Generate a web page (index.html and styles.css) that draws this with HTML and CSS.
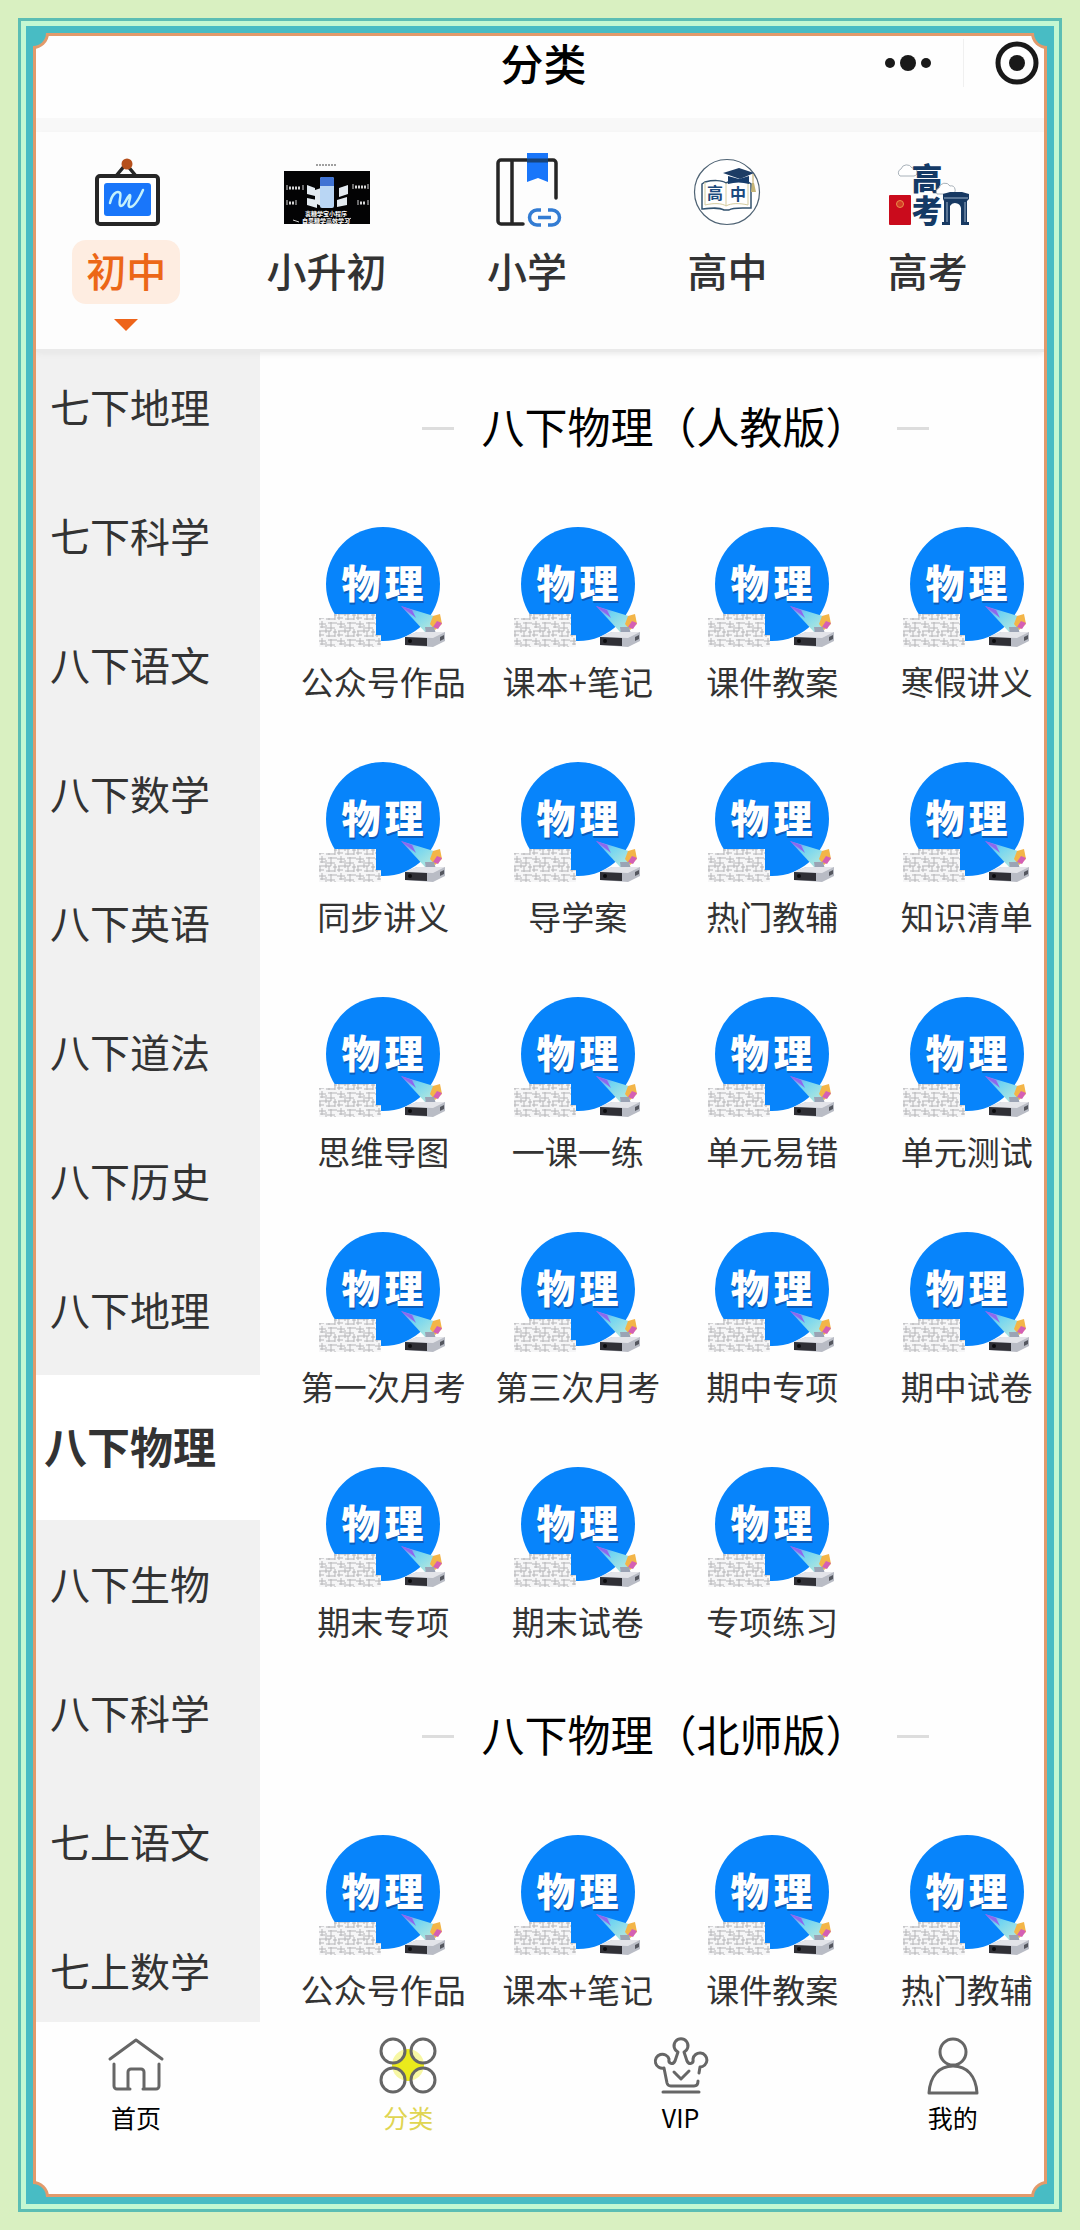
FILE: index.html
```html
<!DOCTYPE html>
<html lang="zh-CN">
<head>
<meta charset="utf-8">
<meta name="viewport" content="width=device-width, initial-scale=1">
<title>分类</title>
<link rel="stylesheet" href="styles.css">
</head>
<body>
<svg class="defs" aria-hidden="true">
  <defs>
    <linearGradient id="beam" x1="0" y1="0" x2="1" y2="1">
      <stop offset="0" stop-color="#a55be8"/><stop offset=".35" stop-color="#6fd4f2"/><stop offset=".75" stop-color="#a5e3e2"/><stop offset="1" stop-color="#b9c4d0"/>
    </linearGradient>
    <pattern id="notes" width="19" height="17" patternUnits="userSpaceOnUse">
      <path d="M0 3h8M10 2h9M2 6h5M9 7h8M1 10h12M15 11h4M0 14h6M8 15h9M4 0v7M8 4v8M13 1v9M17 8v8M2 10v6M11 10v6" stroke="#b4b4b7" stroke-width="1" fill="none"/>
    </pattern>
    <symbol id="physics" viewBox="0 0 130 130">
      <circle cx="65" cy="65" r="57" fill="#0784fb"/>
      <text x="44 87" y="81" text-anchor="middle" class="physics-shadow">物理</text>
      <text x="43 86" y="79" text-anchor="middle" class="physics-text">物理</text>
      <path d="M1 99h15v-4h42v21h5v12H1z" fill="#f6f6f7"/>
      <path d="M1 99h15v-4h42v21h5v12H1z" fill="url(#notes)"/>
      <path d="M83 87 119 98l-3 12-8 4z" fill="url(#beam)"/>
      <path d="M83 87l11 4 4 8z" fill="#8f66ee"/>
      <path d="M115 97l7-2 2 10-7 6-5-6z" fill="#f3b548"/>
      <path d="M119 102l5 2-4 6-5-2z" fill="#d45fb4"/>
      <path d="M107 108h9l2 7h-10z" fill="#9ba3b4"/>
      <path d="M87 118l12-5h28v9l-12 6-28-2z" fill="#b9bcc5"/>
      <path d="M87 118l12-5h28l-12 6z" fill="#e3e4e9"/>
      <path d="M87 118l22 1v8l-22-1z" fill="#303036"/>
      <path d="M122 118l4-2v4l-4 2z" fill="#55575f"/>
      <circle cx="92" cy="122" r="2" fill="#0b0b0d"/>
    </symbol>
    <symbol id="corner" viewBox="0 0 16 16">
      <path d="M0 0H16A16 16 0 0 1 0 16z" fill="#e29a6b"/>
      <path d="M0 0H13A13 13 0 0 1 0 13z" fill="#48bcc4"/>
    </symbol>
  </defs>
</svg>

<div class="frame">
<div class="frame-mint">
<div class="frame-teal">
  <svg class="corner corner-tl"><use href="#corner"/></svg>
  <svg class="corner corner-tr"><use href="#corner"/></svg>
  <svg class="corner corner-bl"><use href="#corner"/></svg>
  <svg class="corner corner-br"><use href="#corner"/></svg>
  <div class="app">
    <header class="header">
      <h1 class="title">分类</h1>
      <div class="capsule">
        <button class="capsule-btn" type="button" aria-label="更多">
          <svg width="48" height="44" viewBox="0 0 48 44"><circle cx="6" cy="22" r="5" fill="#191919"/><circle cx="24" cy="22" r="8" fill="#191919"/><circle cx="42" cy="22" r="5" fill="#191919"/></svg>
        </button>
        <span class="capsule-line"></span>
        <button class="capsule-btn" type="button" aria-label="关闭">
          <svg width="44" height="44" viewBox="0 0 44 44"><circle cx="22" cy="22" r="19" fill="none" stroke="#191919" stroke-width="5"/><circle cx="22" cy="22" r="8" fill="#191919"/></svg>
        </button>
      </div>
    </header>

    <nav class="stages">
      <button class="stage stage-active" type="button">
        <svg class="stage-icon" viewBox="0 0 92 78">
          <path d="M36 26l10-12 10 12" fill="none" stroke="#262626" stroke-width="3.5"/>
          <rect x="17" y="26" width="61" height="48" rx="3" fill="#fff" stroke="#262626" stroke-width="4"/>
          <rect x="24" y="33" width="47" height="33" rx="3" fill="#1976fa"/>
          <path d="M30 53c2-9 7-13 10-10 2 3-3 12 1 13 4 0 6-10 9-11 2 1-4 11 0 12 4 0 9-8 13-17" fill="none" stroke="#c4f1fb" stroke-width="2.5" stroke-linecap="round"/>
          <circle cx="47" cy="14" r="5.500" fill="#b5501c"/>
        </svg>
        <span class="stage-label">初中</span>
        <span class="stage-arrow"></span>
      </button>
      <button class="stage" type="button">
        <svg class="stage-icon" viewBox="0 0 92 78">
          <path d="M35 15h20" stroke="#a0a0a0" stroke-width="2" stroke-dasharray="2 1"/>
          <rect x="3" y="21" width="86" height="53" fill="#030304"/>
          <g fill="#e3eaf0"><path d="M26 35l8 3v8l-8-2zM26 48l10 2v8l-10-3zM67 35l-9 3v9l9-3zM66 47l-10 3v7l10-2zM34 40l6-2v18l-6-3z"/></g>
          <rect x="39" y="27" width="14" height="31" rx="2" fill="#b9d6f4"/>
          <path d="M39 29a2 2 0 0 1 2-2h10a2 2 0 0 1 2 2v7H39z" fill="#3f72d3"/>
          <g stroke="#d6d6d6" stroke-width="1" fill="none"><path d="M6 35v5M22 35v5M6 50v5M15 50v5M72 34v5M87 34v5M77 50v5M87 50v5"/><path d="M8 38h12M8 53h5M74 37h11M79 53h6" stroke-dasharray="2 1" stroke-width="3"/><path d="M12 70l6 2M70 68l-5 4"/></g>
          <text x="45" y="66" class="poster-text" text-anchor="middle">衷糖学宝小程序</text>
          <text x="45" y="73" class="poster-text" text-anchor="middle">自思糖学高效学习</text>
        </svg>
        <span class="stage-label">小升初</span>
      </button>
      <button class="stage" type="button">
        <svg class="stage-icon" viewBox="0 0 92 78">
          <path d="M42 74H20a3 3 0 0 1-3-3V13a3 3 0 0 1 3-3h52a3 3 0 0 1 3 3v35M31 10v64" fill="none" stroke="#262626" stroke-width="3.500" stroke-linecap="round"/>
          <path d="M46 3h21v29l-10-4-11 4z" fill="#1976fa"/><path d="M46 8.500h21v4H46z" fill="#174379"/>
          <path d="M60 60h-4a7.500 7.500 0 0 0 0 15h4M67 60h4a7.500 7.500 0 0 1 0 15h-4M57 67.500h13" fill="none" stroke="#337cd3" stroke-width="3.500"/>
        </svg>
        <span class="stage-label">小学</span>
      </button>
      <button class="stage" type="button">
        <svg class="stage-icon" viewBox="0 0 92 78">
          <circle cx="46" cy="42" r="32.500" fill="#fff" stroke="#4f6374" stroke-width="1.200"/>
          <path d="M21 34l3-2c8-2 17-2 21 1 5-3 14-3 22-1l3 2v24c-9 0-18-1-22 2h-5c-5-3-13-2-22-1z" fill="#fff" stroke="#33536f" stroke-width="1.500"/>
          <path d="M24 32v23c8-2 17-2 21 1 5-3 14-3 22-1V32M45 33v23" fill="none" stroke="#d5cc9f" stroke-width="1"/>
          <text x="34" y="49" class="book-text" text-anchor="middle">高</text>
          <text x="57" y="50" class="book-text" text-anchor="middle">中</text>
          <path d="M47 26l11 3 10-3v8c-7-2-14-2-21 0z" fill="#173d6c"/>
          <path d="M42 23l16-5 15 5-14 6z" fill="#1d3d65"/>
          <path d="M72 24v10" stroke="#c0a55d" stroke-width="1"/><path d="M71 33h2l2 9h-5z" fill="#c5b476"/>
        </svg>
        <span class="stage-label">高中</span>
      </button>
      <button class="stage" type="button">
        <svg class="stage-icon" viewBox="0 0 92 78">
          <path d="M18 26a4 4 0 0 1 1-7 6 6 0 0 1 11-1 4 4 0 0 1 2 8z" fill="#fff" stroke="#a9b2ba" stroke-width="1"/>
          <text x="45" y="40" class="exam-text" text-anchor="middle">高</text>
          <text x="45" y="72" class="exam-text" text-anchor="middle">考</text>
          <rect x="7" y="45" width="22" height="30" rx="1" fill="#ca0b1c"/>
          <circle cx="18" cy="54" r="3.500" fill="#d63c25" stroke="#e9914b" stroke-width="1"/>
          <path d="M55 44a4 4 0 0 1 2-6 6 6 0 0 1 11-2 4 4 0 0 1 2 8z" fill="#fff" stroke="#a9b2ba" stroke-width="1"/>
          <path d="M61 49v-5l7-2h12l7 2v5l-2 2v21h2v3H79V58a6 6 0 0 0-11-2v19h-8v-3h2V51z" fill="#173962"/>
          <path d="M65 52v20M83 52v20M62 48h24" stroke="#9eb3c9" stroke-width="1"/>
        </svg>
        <span class="stage-label">高考</span>
      </button>
    </nav>

    <div class="body">
      <nav class="sidebar">
        <a class="subject" href="#">七下地理</a>
        <a class="subject" href="#">七下科学</a>
        <a class="subject" href="#">八下语文</a>
        <a class="subject" href="#">八下数学</a>
        <a class="subject" href="#">八下英语</a>
        <a class="subject" href="#">八下道法</a>
        <a class="subject" href="#">八下历史</a>
        <a class="subject" href="#">八下地理</a>
        <a class="subject subject-active" href="#" aria-current="true">八下物理</a>
        <a class="subject" href="#">八下生物</a>
        <a class="subject" href="#">八下科学</a>
        <a class="subject" href="#">七上语文</a>
        <a class="subject" href="#">七上数学</a>
      </nav>

      <main class="content">
        <section class="section">
          <h2 class="section-title">八下物理（人教版）</h2>
          <div class="grid">
            <a class="item" href="#"><svg class="item-icon"><use href="#physics"/></svg>公众号作品</a>
            <a class="item" href="#"><svg class="item-icon"><use href="#physics"/></svg>课本+笔记</a>
            <a class="item" href="#"><svg class="item-icon"><use href="#physics"/></svg>课件教案</a>
            <a class="item" href="#"><svg class="item-icon"><use href="#physics"/></svg>寒假讲义</a>
            <a class="item" href="#"><svg class="item-icon"><use href="#physics"/></svg>同步讲义</a>
            <a class="item" href="#"><svg class="item-icon"><use href="#physics"/></svg>导学案</a>
            <a class="item" href="#"><svg class="item-icon"><use href="#physics"/></svg>热门教辅</a>
            <a class="item" href="#"><svg class="item-icon"><use href="#physics"/></svg>知识清单</a>
            <a class="item" href="#"><svg class="item-icon"><use href="#physics"/></svg>思维导图</a>
            <a class="item" href="#"><svg class="item-icon"><use href="#physics"/></svg>一课一练</a>
            <a class="item" href="#"><svg class="item-icon"><use href="#physics"/></svg>单元易错</a>
            <a class="item" href="#"><svg class="item-icon"><use href="#physics"/></svg>单元测试</a>
            <a class="item" href="#"><svg class="item-icon"><use href="#physics"/></svg>第一次月考</a>
            <a class="item" href="#"><svg class="item-icon"><use href="#physics"/></svg>第三次月考</a>
            <a class="item" href="#"><svg class="item-icon"><use href="#physics"/></svg>期中专项</a>
            <a class="item" href="#"><svg class="item-icon"><use href="#physics"/></svg>期中试卷</a>
            <a class="item" href="#"><svg class="item-icon"><use href="#physics"/></svg>期末专项</a>
            <a class="item" href="#"><svg class="item-icon"><use href="#physics"/></svg>期末试卷</a>
            <a class="item" href="#"><svg class="item-icon"><use href="#physics"/></svg>专项练习</a>
          </div>
        </section>
        <section class="section">
          <h2 class="section-title">八下物理（北师版）</h2>
          <div class="grid">
            <a class="item" href="#"><svg class="item-icon"><use href="#physics"/></svg>公众号作品</a>
            <a class="item" href="#"><svg class="item-icon"><use href="#physics"/></svg>课本+笔记</a>
            <a class="item" href="#"><svg class="item-icon"><use href="#physics"/></svg>课件教案</a>
            <a class="item" href="#"><svg class="item-icon"><use href="#physics"/></svg>热门教辅</a>
          </div>
        </section>
      </main>
    </div>

    <nav class="tabbar">
      <a class="tab" href="#">
        <svg class="tab-icon" viewBox="0 0 60 60"><path d="M4 24 30 5l26 19M8 29v22a3 3 0 0 0 3 3h13M37 54h13a3 3 0 0 0 3-3V29M22 54V37a3 3 0 0 1 3-3h10a3 3 0 0 1 3 3v17"/></svg>
        首页
      </a>
      <a class="tab tab-active" href="#" aria-current="page">
        <svg class="tab-icon" viewBox="0 0 60 60"><circle cx="30" cy="30" r="16" fill="#eaea1c" stroke="none"/><g fill="#fff" fill-opacity=".6"><circle cx="15" cy="16" r="12"/><circle cx="45" cy="16" r="12"/><circle cx="15" cy="45" r="12"/><circle cx="45" cy="45" r="12"/></g></svg>
        分类
      </a>
      <a class="tab" href="#">
        <svg class="tab-icon" viewBox="0 0 60 60"><path d="M48 38l1-6a7 7 0 1 0-7-8c1 5-4 6-6 2l-3-9a7 7 0 1 0-6 0l-3 9c-2 4-7 3-6-2a7 7 0 1 0-5 9l3 15a4 4 0 0 0 4 3h23c3 0 4-2 4-5M12 57h36M23 37l7 7 8-8"/></svg>
        VIP
      </a>
      <a class="tab" href="#">
        <svg class="tab-icon" viewBox="0 0 60 60"><circle cx="30" cy="17" r="13"/><path d="M6 58c1-17 10-27 24-27s23 10 24 27z"/></svg>
        我的
      </a>
    </nav>
  </div>
</div>
</div>
</div>
</body>
</html>
```

FILE: styles.css
```css
* {
  box-sizing: border-box;
}

body {
  margin: 0;
  min-height: 100vh;
  padding: 18px 18px 19px;
  display: flex;
  background: #d9f0c1;
  color: #333;
  font-family: "Noto Sans CJK SC", "Noto Sans", sans-serif;
}

h1,
h2 {
  margin: 0;
}

a {
  color: inherit;
  text-decoration: none;
}

button {
  border: 0;
  padding: 0;
  background: none;
  color: inherit;
  font-family: inherit;
}

svg {
  display: block;
  flex-shrink: 0;
}

.defs {
  position: absolute;
  width: 0;
  height: 0;
}

/* Decorative border: thin line, mint gap, teal band, orange edge */
.frame,
.frame-mint,
.frame-teal,
.app {
  display: flex;
  flex: 1;
  min-width: 0;
}

.frame {
  border: 3px solid #5cbdb4;
}

.frame-mint {
  border: 5px solid #c3f8d2;
}

.frame-teal {
  position: relative;
  border: 7px solid #48bcc4;
}

.corner {
  position: absolute;
  z-index: 2;
  width: 16px;
  height: 16px;
}

.corner-tl {
  top: 0;
  left: 0;
}

.corner-tr {
  top: 0;
  right: 0;
  transform: scaleX(-1);
}

.corner-bl {
  bottom: 0;
  left: 0;
  transform: scaleY(-1);
}

.corner-br {
  right: 0;
  bottom: 0;
  transform: rotate(180deg);
}

.app {
  flex-direction: column;
  overflow-x: clip;
  border: 3px solid #e29a6b;
  background: #fefefe;
}

/* Header */
.header {
  display: grid;
  grid-template-columns: 1fr auto 1fr;
  align-items: start;
  height: 96px;
  padding: 0 5px 0 12px;
  border-bottom: 14px solid #f8f8f8;
}

.title {
  grid-column: 2;
  color: #000;
  font-size: 43px;
  font-weight: 500;
  line-height: 52px;
}

.capsule {
  display: flex;
  align-items: center;
  justify-content: flex-end;
  gap: 31px;
  padding-top: 3px;
}

.capsule-line {
  width: 1px;
  height: 48px;
  background: #f0f0f0;
}

/* School stages */
.stages {
  position: relative;
  z-index: 1;
  display: grid;
  grid-template-columns: repeat(5, 1fr);
  height: 217px;
  margin: 0 16px 0 -10px;
  padding-top: 18px;
}

.stages::before {
  content: "";
  position: absolute;
  z-index: -1;
  inset: 0 -16px 0 10px;
  background: #fdfdfd;
  box-shadow: 0 3px 0 #eaeaea, 0 4px 6px #e4e4e4;
}

.stage {
  display: flex;
  flex-direction: column;
  align-items: center;
}

.stage-icon {
  width: 92px;
  height: 78px;
  overflow: visible;
}

.stage-label {
  margin-top: 12px;
  padding: 0 14px 4px;
  border-radius: 14px;
  font-size: 40px;
  font-weight: 500;
  line-height: 60px;
}

.stage-active .stage-label {
  background: #feede1;
  color: #ec6717;
}

.stage-arrow {
  margin-top: 15px;
  border: 12px solid transparent;
  border-top-color: #ee641a;
  border-bottom: 0;
}

/* Subjects and materials */
.body {
  display: flex;
  flex: 1;
}

.sidebar {
  flex: 0 0 224px;
  margin-top: -6px;
  background: #f1f1f1;
}

.subject {
  display: block;
  padding: 31px 14px 33px;
  font-size: 40px;
  line-height: 65px;
}

.subject:last-child {
  padding-bottom: 19px;
}

.subject-active {
  padding: 38px 8px 42px;
  background: #fff;
  font-size: 43px;
  font-weight: 700;
}

.content {
  flex: 1;
  min-width: 0;
  padding-left: 26px;
}

.section {
  margin-right: -20px;
  padding-top: 48px;
}

.section + .section {
  padding-top: 62px;
}

.section-title {
  display: flex;
  align-items: center;
  justify-content: center;
  gap: 28px;
  margin-bottom: 66px;
  color: #000;
  font-size: 43px;
  font-weight: 400;
  line-height: 56px;
}

.section-title::before,
.section-title::after {
  content: "";
  width: 32px;
  height: 3px;
  margin-top: 6px;
  background: #ddd;
}

.grid {
  display: grid;
  grid-template-columns: repeat(4, 1fr);
  row-gap: 51px;
}

.item {
  display: flex;
  flex-direction: column;
  align-items: center;
  gap: 10px;
  font-size: 33px;
  line-height: 44px;
  white-space: nowrap;
}

.item-icon {
  width: 130px;
  height: 130px;
}

/* Bottom navigation */
.tabbar {
  display: grid;
  grid-template-columns: repeat(4, 1fr);
  height: 172px;
  margin: 0 -45px 0 -36px;
  padding-top: 13px;
  color: #000;
}

.tab {
  display: flex;
  flex-direction: column;
  align-items: center;
  gap: 4px;
  font-size: 25px;
  line-height: 36px;
}

.tab-active {
  color: #e0d552;
}

.tab-icon {
  width: 60px;
  height: 60px;
  fill: none;
  stroke: #666;
  stroke-width: 3;
  stroke-linecap: round;
  stroke-linejoin: round;
}

/* Lettering inside the pictures */
.physics-text,
.physics-shadow {
  font-size: 39px;
  font-weight: 900;
}

.physics-text {
  fill: #fff;
}

.physics-shadow {
  fill: #0b5cba;
}

.poster-text {
  fill: #fff;
  font-size: 6px;
  font-weight: 700;
}

.book-text {
  fill: #1c4a7d;
  font-size: 16px;
  font-weight: 700;
}

.exam-text {
  fill: #143a66;
  font-size: 31px;
  font-weight: 900;
}
```
